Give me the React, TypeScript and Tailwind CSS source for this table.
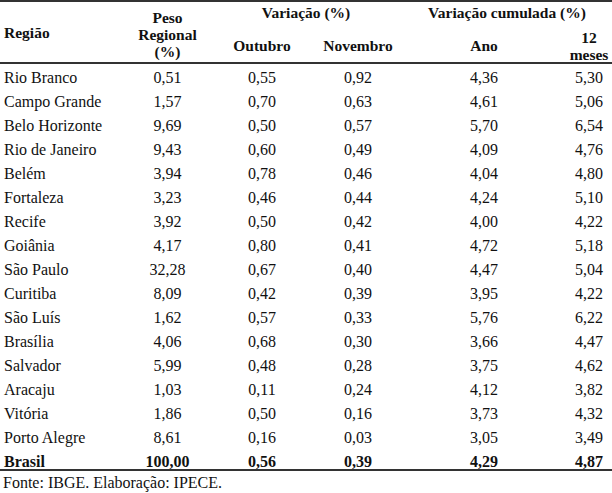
const rows: [string, string, string, string, string, string][] = [
  ["Rio Branco", "0,51", "0,55", "0,92", "4,36", "5,30"],
  ["Campo Grande", "1,57", "0,70", "0,63", "4,61", "5,06"],
  ["Belo Horizonte", "9,69", "0,50", "0,57", "5,70", "6,54"],
  ["Rio de Janeiro", "9,43", "0,60", "0,49", "4,09", "4,76"],
  ["Belém", "3,94", "0,78", "0,46", "4,04", "4,80"],
  ["Fortaleza", "3,23", "0,46", "0,44", "4,24", "5,10"],
  ["Recife", "3,92", "0,50", "0,42", "4,00", "4,22"],
  ["Goiânia", "4,17", "0,80", "0,41", "4,72", "5,18"],
  ["São Paulo", "32,28", "0,67", "0,40", "4,47", "5,04"],
  ["Curitiba", "8,09", "0,42", "0,39", "3,95", "4,22"],
  ["São Luís", "1,62", "0,57", "0,33", "5,76", "6,22"],
  ["Brasília", "4,06", "0,68", "0,30", "3,66", "4,47"],
  ["Salvador", "5,99", "0,48", "0,28", "3,75", "4,62"],
  ["Aracaju", "1,03", "0,11", "0,24", "4,12", "3,82"],
  ["Vitória", "1,86", "0,50", "0,16", "3,73", "4,32"],
  ["Porto Alegre", "8,61", "0,16", "0,03", "3,05", "3,49"],
];

const cols = "grid grid-cols-[125px_85px_104px_88px_164px_46px]";

function Row({ cells, bold, last }: { cells: string[]; bold?: boolean; last?: boolean }) {
  return (
    <div className={`${cols} ${last ? "h-[19px] leading-6" : "h-6 leading-6"} ${bold ? "font-bold" : ""}`}>
      <div className="pl-1">{cells[0]}</div>
      {cells.slice(1).map((c, i) => (
        <div key={i} className="text-center">
          {c}
        </div>
      ))}
    </div>
  );
}

export default function App() {
  return (
    <div className="w-[612px] h-[493px] overflow-hidden bg-white text-[#111] text-[16px] font-['Liberation_Serif',serif]">
      <div className="border-t-2 border-b-2 border-[#333]">
        <div className={`${cols} grid-rows-[22px_38px] h-[60px] font-bold text-[15.5px] leading-[17px]`}>
          <div className="row-span-2 flex items-center pl-1">Região</div>
          <div className="row-span-2 flex items-center justify-center text-center pt-1">
            Peso
            <br />
            Regional
            <br />
            (%)
          </div>
          <div className="col-span-2 flex items-start justify-center pt-[2px]">Variação (%)</div>
          <div className="col-span-2 flex items-start justify-center pt-[2px]">Variação cumulada (%)</div>
          <div className="flex items-center justify-center pt-1">Outubro</div>
          <div className="flex items-center justify-center pt-1">Novembro</div>
          <div className="flex items-center justify-center pt-1">Ano</div>
          <div className="flex items-center justify-center text-center pt-[5px]">
            12
            <br />
            meses
          </div>
        </div>
      </div>
      <div className="pt-[2px] border-b-2 border-[#333]">
        {rows.map((r) => (
          <Row key={r[0]} cells={r} />
        ))}
        <Row cells={["Brasil", "100,00", "0,56", "0,39", "4,29", "4,87"]} bold last />
      </div>
      <p className="pl-[3px] pt-[2px] leading-5">Fonte: IBGE. Elaboração: IPECE.</p>
    </div>
  );
}
